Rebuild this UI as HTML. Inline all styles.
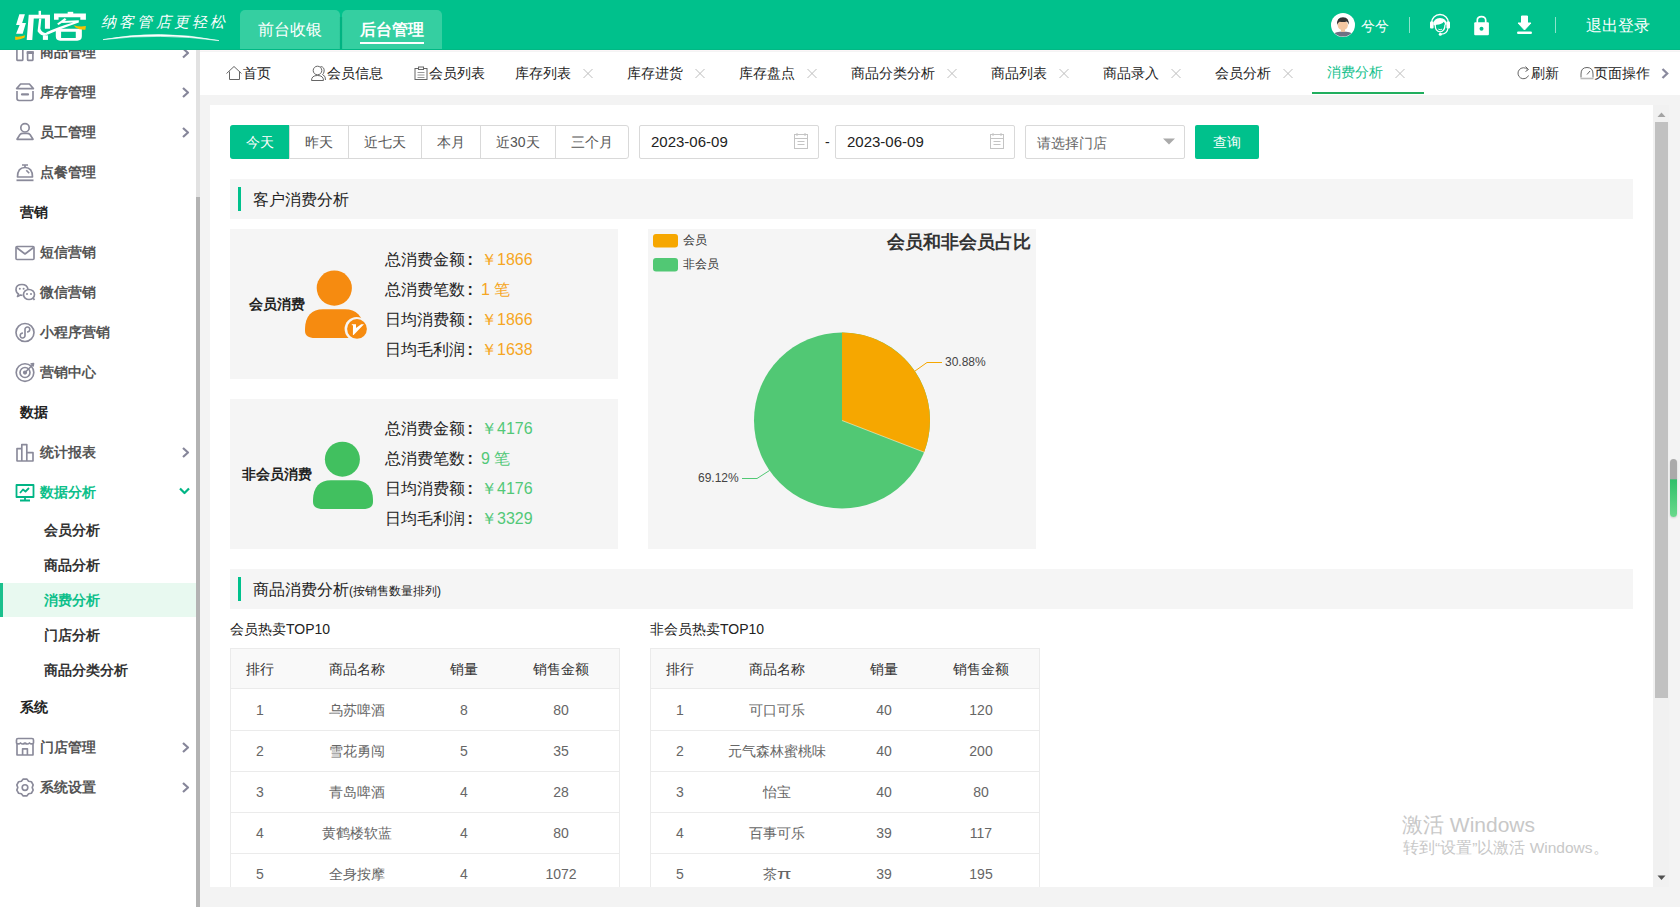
<!DOCTYPE html>
<html><head><meta charset="utf-8">
<style>
*{box-sizing:border-box;margin:0;padding:0}
html,body{width:1680px;height:907px;overflow:hidden;background:#f3f3f3;font-family:"Liberation Sans",sans-serif;color:#333}
.a{position:absolute}
.t{position:absolute;white-space:nowrap;line-height:20px;font-size:14px}
#hdr{position:absolute;left:0;top:0;width:1680px;height:50px;background:#00c18c;z-index:10}
#side{position:absolute;left:0;top:0;width:196px;height:907px;background:#fff}
#sbar{position:absolute;left:196px;top:50px;width:4px;height:857px;background:#e2e2e2}
#sthumb{position:absolute;left:196px;top:197px;width:4px;height:710px;background:#b3b3b3}
.si{position:absolute;left:40px;font-size:14px;font-weight:bold;color:#555;line-height:20px;white-space:nowrap}
.sg{position:absolute;left:20px;font-size:14px;font-weight:bold;color:#222;line-height:20px;white-space:nowrap}
.ss{position:absolute;left:44px;font-size:14px;font-weight:bold;color:#333;line-height:20px;white-space:nowrap}
.ic{position:absolute;left:15px;width:20px;height:20px}
.arr{position:absolute;left:180px;width:12px;height:12px}
#tabs{position:absolute;left:200px;top:50px;width:1480px;height:45px;background:#fff}
.tb{position:absolute;top:63px;font-size:14px;line-height:20px;color:#222;white-space:nowrap}
.x{position:absolute;top:68px;width:11px;height:11px}
#panel{position:absolute;left:210px;top:105px;width:1443px;height:782px;background:#fff;overflow:hidden}
</style></head><body>

<!-- HEADER -->
<div id="hdr">
  <svg class="a" style="left:10px;top:5px" width="85" height="40" viewBox="0 0 1680 791" preserveAspectRatio="none">
    <g fill="#fff">
      <path d="M185,185 L295,185 L240,355 L315,355 L250,570 L120,570 L190,395 L120,395Z"/>
      <path d="M370,195 L790,195 L790,470 L690,470 L690,265 L470,265 L440,690 L330,690Z"/>
      <rect x="565" y="115" width="48" height="90"/>
      <path d="M575,265 L620,265 L600,470 Q640,560 720,555 L700,610 Q600,610 545,520Z"/>
      <rect x="650" y="600" width="100" height="90"/>
      <path d="M870,170 L1500,170 L1500,290 L1390,290 L1390,240 L960,240 L960,290 L870,290Z"/>
      <rect x="1140" y="135" width="110" height="45"/>
      <path d="M930,370 L1085,255 L1115,290 L960,395Z"/>
      <path d="M1030,315 L1360,300 L1360,345 Q1000,470 760,580 L700,600 L720,540 Q950,430 1250,345 L1030,355Z"/>
      <path d="M905,520 Q905,470 960,470 L1420,470 L1420,620 Q1420,705 1330,705 L990,705 Q905,705 905,620Z M1010,530 L1010,655 L1300,655 L1300,530Z" fill-rule="evenodd"/>
    </g>
    <path d="M100,625 Q200,640 300,600 L285,650 Q200,690 105,690Z" fill="#f8c000"/>
    <path d="M1260,400 Q1380,440 1500,415 L1490,490 Q1380,500 1290,440Z" fill="#f8c000"/>
  </svg>
  <svg class="a" style="left:0;top:0" width="240" height="50"><path d="M103,39.6 Q160,29 219,40.6 Q160,32.6 103,39.6Z" fill="#fff" stroke="#fff" stroke-width="0.6"/></svg>
  <div class="a" style="left:101px;top:11px;font-size:15px;line-height:22px;color:#fff;letter-spacing:3.2px;font-style:italic;font-weight:300;font-family:'Liberation Serif',serif">纳客管店更轻松</div>
  <div class="a" style="left:240px;top:10px;width:100px;height:40px;background:#35cfa1;border-radius:5px 5px 0 0"></div>
  <div class="a" style="left:342px;top:10px;width:100px;height:40px;background:#35cfa1;border-radius:5px 5px 0 0"></div>
  <div class="t" style="left:258px;top:20px;font-size:16px;color:#fff">前台收银</div>
  <div class="t" style="left:360px;top:20px;font-size:16px;font-weight:bold;color:#fff">后台管理</div>
  <div class="a" style="left:360px;top:42px;width:64px;height:2px;background:#fff"></div>
  <div class="a" style="left:339px;top:17px;width:4px;height:33px;background:linear-gradient(90deg,rgba(0,140,100,0) 0,rgba(0,140,100,.35) 50%,rgba(0,140,100,0) 100%)"></div>
  <div class="a" style="left:0;top:49px;width:1680px;height:1px;background:#01b884"></div>
  <!-- avatar -->
  <svg class="a" style="left:1331px;top:13px" width="24" height="24" viewBox="0 0 24 24">
    <circle cx="12" cy="12" r="12" fill="#fff"/>
    <clipPath id="cc"><circle cx="12" cy="12" r="11.5"/></clipPath>
    <g clip-path="url(#cc)">
      <path d="M0,25 L1.5,21.5 Q4.5,18.4 12,18.4 Q19.5,18.4 22.5,21.5 L24,25Z" fill="#6f7083"/>
      <rect x="10" y="14.5" width="4" height="4.3" fill="#f1c39c"/>
      <ellipse cx="11.8" cy="12.2" rx="5.1" ry="5" fill="#f4c8a2"/>
      <path d="M6.2,12 Q5.2,4.2 12,4.2 Q18.5,4.2 17.6,11.8 Q17,8.6 15.6,8.4 Q13,9.6 8.6,8.8 Q6.8,9.6 6.2,12Z" fill="#333"/>
    </g>
  </svg>
  <div class="t" style="left:1361px;top:16px;color:#fff">兮兮</div>
  <div class="a" style="left:1409px;top:17px;width:1px;height:16px;background:rgba(255,255,255,.55)"></div>
  <!-- headset -->
  <svg class="a" style="left:1425px;top:10px" width="30" height="30" viewBox="1425 10 30 30">
    <g fill="#fff">
      <path d="M1431.5,23 A8.5,8.5 0 0 1 1448.5,23" stroke="#fff" stroke-width="1.4" fill="none"/>
      <rect x="1430" y="21.5" width="3.6" height="7" rx="1"/>
      <rect x="1446.4" y="21.5" width="3.6" height="7" rx="1"/>
      <path d="M1433.3,24.5 Q1433.5,18 1440,18 Q1446.5,18 1446.7,24.5 L1445.2,25 Q1444.8,22.5 1443.8,21.8 Q1442,24.3 1436.5,24.8 L1434.8,25.5Z"/>
      <path d="M1435.2,25 Q1435.2,31.5 1440,31.8 Q1445,31.5 1445,24.5" stroke="#fff" stroke-width="1.3" fill="none"/>
      <path d="M1438.3,29.2 Q1440.2,30.2 1442,29.2" stroke="#fff" stroke-width="0.9" fill="none"/>
      <path d="M1448,28 Q1447.5,33.8 1441,34.2" stroke="#fff" stroke-width="1.2" fill="none"/>
      <circle cx="1440.3" cy="34.2" r="1.5"/>
    </g>
  </svg>
  <!-- lock -->
  <svg class="a" style="left:1473px;top:14px" width="17" height="22" viewBox="0 0 17 22">
    <path d="M4.3,9.5 V6.3 Q4.3,2.6 8.5,2.6 Q12.7,2.6 12.7,6.3 V9.5" stroke="#fff" stroke-width="1.7" fill="none"/>
    <rect x="1.2" y="8.3" width="14.7" height="12.9" rx="1" fill="#fff"/>
    <circle cx="8.5" cy="14.7" r="2" fill="#00c18c"/>
  </svg>
  <!-- download -->
  <svg class="a" style="left:1515.5px;top:15px" width="17" height="20" viewBox="0 0 17 20">
    <path d="M5.5,1 H11.5 V8 H15 L8.5,15 L2,8 H5.5Z" fill="#fff" stroke="#fff" stroke-width="1" stroke-linejoin="round"/>
    <rect x="1" y="16.5" width="15" height="2.5" rx="1.2" fill="#fff"/>
  </svg>
  <div class="a" style="left:1555px;top:17px;width:1px;height:16px;background:rgba(255,255,255,.55)"></div>
  <div class="t" style="left:1586px;top:16px;font-size:16px;color:#fff">退出登录</div>
</div>

<!-- SIDEBAR -->
<div id="side">
  <svg class="a" style="left:0;top:0" width="196" height="907">
    <g stroke="#8a8a9a" stroke-width="1.65" fill="none" stroke-linejoin="round">
      <!-- 商品管理 bars -->
      <rect x="16.9" y="38" width="5.9" height="22.3" rx="0.5"/>
      <rect x="27.6" y="52" width="5.3" height="8.3" rx="0.5"/>
      <rect x="26.7" y="51.2" width="7.1" height="2.8" fill="#8a8a9a" stroke="none"/>
      <!-- 库存管理 box -->
      <path d="M17,91 V98.6 Q17,100.5 19,100.5 H31 Q33,100.5 33,98.6 V91"/>
      <path d="M16.6,88.6 L20.6,84 H29.4 L33.4,88.6Z"/>
      <path d="M22,94.4 H28" stroke-width="2.2" stroke-linecap="round"/>
      <!-- 员工管理 person -->
      <circle cx="25" cy="127.8" r="4.2"/>
      <path d="M17,139.3 L20,134.5 Q21,133.3 23,133.3 H27 Q29,133.3 30,134.5 L33,139.3Z"/>
      <!-- 点餐 bell -->
      <path d="M22,165 H28 M25,165 V167.5"/>
      <path d="M17.5,177 Q17.5,167.5 25,167.5 Q32.5,167.5 32.5,177Z"/>
      <path d="M26.3,170.2 L29.2,173.3"/>
      <path d="M16.5,180.3 H33.5" stroke-width="1.8"/>
      <!-- mail -->
      <rect x="16" y="246.5" width="18" height="13" rx="1"/>
      <path d="M16.5,247.5 L25,254 L33.5,247.5"/>
      <!-- wechat -->
      <path d="M28,289 Q27,284.5 22,284.5 Q16,284.5 16,289.5 Q16,292.5 18.5,294 L17.5,296.5 L20.5,295 Q21.5,295.3 22.5,295.3"/>
      <ellipse cx="29" cy="294.5" rx="5.5" ry="5"/>
      <path d="M33,298 L34.5,300" /><g fill="#8a8a9a" stroke="none"><circle cx="19.8" cy="288.8" r="1"/><circle cx="23.6" cy="288.8" r="1"/><circle cx="27" cy="294" r="1"/><circle cx="31" cy="294" r="1"/></g>
      <!-- mini program -->
      <circle cx="25" cy="332.5" r="9"/>
      <path d="M22.9,333.2 A2.4,2.4 0 1 0 25,335.5 V329.5 A2.4,2.4 0 1 1 27.1,331.8"/>
      <!-- target -->
      <circle cx="25" cy="372.5" r="8.8"/>
      <circle cx="25" cy="372.5" r="5"/>
      <circle cx="25" cy="372.5" r="1.3" fill="#8a8a9a"/>
      <path d="M25,372.5 L33,364.5 M30.5,364 L33.5,363.5 L33,366.5"/>
      <!-- bar chart -->
      <path d="M17,461 V448.6 H21.8 V461 M21.8,461 V444.6 H26.8 V461 M26.8,461 V452.6 H33 V461 H16.5"/>
      <!-- store -->
      <path d="M17,743 V755 H33 V743"/>
      <path d="M16.5,743 V740 Q16.5,738.5 18,738.5 H32 Q33.5,738.5 33.5,740 V743 Q31.5,745 29.5,743 Q27.5,745 25,743 Q22.5,745 20.5,743 Q18.5,745 16.5,743Z"/>
      <path d="M22.6,755 V748.8 H27.4 V755"/>
      <!-- gear -->
      <path d="M23.21,779.09 L26.79,779.09 L28.60,781.26 L31.39,781.75 L33.18,784.84 L32.20,787.50 L33.18,790.16 L31.39,793.25 L28.60,793.74 L26.79,795.91 L23.21,795.91 L21.40,793.74 L18.61,793.25 L16.82,790.16 L17.80,787.50 L16.82,784.84 L18.61,781.75 L21.40,781.26Z"/>
      <circle cx="25" cy="787.5" r="2.8"/>
      <!-- arrows -->
      <g stroke-width="2.2" stroke="#86869a">
      <path d="M183,48.5 L188,53 L183,57.5"/>
      <path d="M183,88 L188,92.5 L183,97"/>
      <path d="M183,128 L188,132.5 L183,137"/>
      <path d="M183,448 L188,452.5 L183,457"/>
      <path d="M183,743 L188,747.5 L183,752"/>
      <path d="M183,783 L188,787.5 L183,792"/>
      </g>
    </g>
    <g stroke="#00b585" stroke-width="1.8" fill="none" stroke-linejoin="round">
      <rect x="16.5" y="485" width="17" height="12" />
      <path d="M25,497 V500 M20,500.5 H30"/>
      <path d="M20,493 L23,489.5 L25.5,491.5 L29,488"/>
      <path d="M180,488.5 L184.5,493 L189,488.5" stroke-width="2.2"/>
    </g>
    <rect x="0" y="583" width="196" height="34" fill="#e8f9f0"/>
    <rect x="0" y="583" width="3" height="34" fill="#1bc08d"/>
  </svg>
  <div class="si" style="top:42px">商品管理</div>
  <div class="si" style="top:82px">库存管理</div>
  <div class="si" style="top:122px">员工管理</div>
  <div class="si" style="top:162px">点餐管理</div>
  <div class="sg" style="top:202px">营销</div>
  <div class="si" style="top:242px">短信营销</div>
  <div class="si" style="top:282px">微信营销</div>
  <div class="si" style="top:322px">小程序营销</div>
  <div class="si" style="top:362px">营销中心</div>
  <div class="sg" style="top:402px">数据</div>
  <div class="si" style="top:442px">统计报表</div>
  <div class="si" style="top:482px;color:#0dbf8a">数据分析</div>
  <div class="ss" style="top:520px">会员分析</div>
  <div class="ss" style="top:555px">商品分析</div>
  <div class="ss" style="top:590px;color:#0dbf8a">消费分析</div>
  <div class="ss" style="top:625px">门店分析</div>
  <div class="ss" style="top:660px">商品分类分析</div>
  <div class="sg" style="top:697px">系统</div>
  <div class="si" style="top:737px">门店管理</div>
  <div class="si" style="top:777px">系统设置</div>
</div>
<div id="sbar"></div><div id="sthumb"></div>

<!-- TABS -->
<div id="tabs"></div>
<div class="a" style="left:200px;top:50px;width:1480px;height:1px;background:#fcf6f8"></div>
<div class="a" style="left:200px;top:51px;width:1480px;height:1px;background:#f4f4f4"></div>
<svg class="a" style="left:0;top:0;z-index:2" width="1680" height="100">
  <g stroke="#666" stroke-width="1" fill="none">
    <path d="M226.5,73.5 L234,66.5 L241.5,73.5 M229.5,71.5 V79.5 H239.5 V71.5"/>
    <circle cx="317.5" cy="70.5" r="4.3"/>
    <path d="M311.5,80.5 Q311.5,75.5 317.5,75.5 Q323.5,75.5 323.5,80.5Z"/>
    <path d="M320.5,66.5 Q325,67 324,72 Q323.5,74 322.5,74.5 Q326,76 325.5,80"/>
    <rect x="415" y="68.5" width="12" height="11"/>
    <rect x="418.5" y="67" width="5" height="2.5" fill="#fff"/>
    <path d="M417.5,72.5 H424.5 M417.5,75 H424.5 M417.5,77.5 H424.5" stroke="#999"/>
  </g>
  <g stroke="#bdbdbd" stroke-width="1">
    <path d="M583.5,69 L592.5,78 M592.5,69 L583.5,78"/>
    <path d="M695.5,69 L704.5,78 M704.5,69 L695.5,78"/>
    <path d="M807.5,69 L816.5,78 M816.5,69 L807.5,78"/>
    <path d="M947.5,69 L956.5,78 M956.5,69 L947.5,78"/>
    <path d="M1059.5,69 L1068.5,78 M1068.5,69 L1059.5,78"/>
    <path d="M1171.5,69 L1180.5,78 M1180.5,69 L1171.5,78"/>
    <path d="M1283.5,69 L1292.5,78 M1292.5,69 L1283.5,78"/>
    <path d="M1395.5,69 L1404.5,78 M1404.5,69 L1395.5,78"/>
  </g>
  <g stroke="#666" stroke-width="1" fill="none">
    <path d="M1527.5,69.5 A5.5,5.5 0 1 0 1528.5,75.5"/>
    <path d="M1525.5,66.5 L1528.5,69.5 L1525.5,71.5"/>
    <path d="M1581,77.5 V74 Q1581,67.5 1587,67.5 Q1593,67.5 1593,74 V77.5"/><path d="M1580.5,78.5 H1593.5" stroke="#bbb" stroke-width="1.6"/>
    <path d="M1587,74.5 L1590,71"/>
  </g>
  <path d="M1662.5,69 L1667.2,73.5 L1662.5,78" stroke="#8a8a9e" stroke-width="2.3" fill="none"/>
  <rect x="1312" y="92" width="112" height="2" fill="#20ae5e"/>
</svg>
<div class="tb" style="left:243px">首页</div>
<div class="tb" style="left:327px">会员信息</div>
<div class="tb" style="left:429px">会员列表</div>
<div class="tb" style="left:515px">库存列表</div>
<div class="tb" style="left:627px">库存进货</div>
<div class="tb" style="left:739px">库存盘点</div>
<div class="tb" style="left:851px">商品分类分析</div>
<div class="tb" style="left:991px">商品列表</div>
<div class="tb" style="left:1103px">商品录入</div>
<div class="tb" style="left:1215px">会员分析</div>
<div class="tb" style="left:1327px;top:62px;color:#12bf8c">消费分析</div>
<div class="tb" style="left:1531px">刷新</div>
<div class="tb" style="left:1594px">页面操作</div>

<!-- PANEL -->
<div id="panel"></div>
<!-- filter row -->
<div class="a" style="left:230px;top:125px;width:399px;height:34px;border:1px solid #d9d9d9;border-radius:3px;background:#fff"></div>
<div class="a" style="left:230px;top:125px;width:59px;height:34px;background:#00c18c;border-radius:3px 0 0 3px"></div>
<div class="a" style="left:348px;top:125px;width:1px;height:34px;background:#d9d9d9"></div>
<div class="a" style="left:421px;top:125px;width:1px;height:34px;background:#d9d9d9"></div>
<div class="a" style="left:480px;top:125px;width:1px;height:34px;background:#d9d9d9"></div>
<div class="a" style="left:555px;top:125px;width:1px;height:34px;background:#d9d9d9"></div>
<div class="a" style="left:289px;top:125px;width:1px;height:34px;background:#d9d9d9"></div>
<div class="t" style="left:246px;top:132px;color:#fff">今天</div>
<div class="t" style="left:305px;top:132px;color:#555">昨天</div>
<div class="t" style="left:364px;top:132px;color:#555">近七天</div>
<div class="t" style="left:437px;top:132px;color:#555">本月</div>
<div class="t" style="left:496px;top:132px;color:#555">近30天</div>
<div class="t" style="left:571px;top:132px;color:#555">三个月</div>

<div class="a" style="left:639px;top:125px;width:180px;height:34px;border:1px solid #d9d9d9;border-radius:2px;background:#fff"></div>
<div class="a" style="left:835px;top:125px;width:180px;height:34px;border:1px solid #d9d9d9;border-radius:2px;background:#fff"></div>
<div class="t" style="left:651px;top:132px;font-size:15px;color:#222">2023-06-09</div>
<div class="t" style="left:847px;top:132px;font-size:15px;color:#222">2023-06-09</div>
<div class="t" style="left:825px;top:132px;color:#222">-</div>
<svg class="a" style="left:0;top:0" width="1680" height="200">
  <g stroke="#c4c4c4" stroke-width="1" fill="none">
    <rect x="794.5" y="134.5" width="13" height="14"/>
    <path d="M797,133 V136 M805,133 V136 M794.5,138.5 H807.5 M797.5,141.5 H804.5 M797.5,144.5 H804.5"/>
    <rect x="990.5" y="134.5" width="13" height="14"/>
    <path d="M993,133 V136 M1001,133 V136 M990.5,138.5 H1003.5 M993.5,141.5 H1000.5 M993.5,144.5 H1000.5"/>
  </g>
  </svg>
<div class="a" style="left:1025px;top:125px;width:160px;height:34px;border:1px solid #d9d9d9;border-radius:2px;background:#fff"></div>
<div class="t" style="left:1037px;top:133px;color:#666">请选择门店</div>
<svg class="a" style="left:1160px;top:135px" width="20" height="12"><path d="M3,3.5 H15 L9,9.5Z" fill="#aaa"/></svg>
<div class="a" style="left:1195px;top:125px;width:64px;height:34px;background:#00c18c;border-radius:2px"></div>
<div class="t" style="left:1213px;top:132px;color:#fff">查询</div>

<!-- section 1 -->
<div class="a" style="left:230px;top:179px;width:1403px;height:40px;background:#f5f5f5"></div>
<div class="a" style="left:238px;top:187px;width:3px;height:24px;background:#00c18c"></div>
<div class="t" style="left:253px;top:190px;font-size:16px;color:#222">客户消费分析</div>

<!-- card 1 -->
<div class="a" style="left:230px;top:229px;width:388px;height:150px;background:#f5f5f5"></div>
<div class="t" style="left:249px;top:294px;font-weight:bold;color:#222">会员消费</div>
<svg class="a" style="left:300px;top:265px" width="75" height="80" viewBox="300 265 75 80">
  <circle cx="334.3" cy="288.1" r="17.6" fill="#f68b10"/>
  <path d="M305,329 C305,316 312,309.2 323,309.2 H345 C356,309.2 363,316 364,329 V331 C364,335.5 361,338 355,338 H315 C308.5,338 305,335.5 305,331Z" fill="#f68b10"/>
  <circle cx="356.6" cy="328.9" r="12" fill="#f5f5f5"/>
  <circle cx="357" cy="328.9" r="9.9" fill="#f68b10"/>
  <path d="M351.8,324.2 L356,324.2 L356,328 L361.2,324.2 L364,324.2 L353.6,334.9 L352.9,334.9 L353,325.3 L351.8,325.2Z" fill="#fff"/>
</svg>
<div class="t" style="left:385px;top:250px;font-size:16px;color:#222">总消费金额<span style="display:inline-block;width:16px;padding-left:2.5px;font-weight:bold">:</span><span style="color:#f5a623">￥1866</span></div>
<div class="t" style="left:385px;top:280px;font-size:16px;color:#222">总消费笔数<span style="display:inline-block;width:16px;padding-left:2.5px;font-weight:bold">:</span><span style="color:#f5a623">1 笔</span></div>
<div class="t" style="left:385px;top:310px;font-size:16px;color:#222">日均消费额<span style="display:inline-block;width:16px;padding-left:2.5px;font-weight:bold">:</span><span style="color:#f5a623">￥1866</span></div>
<div class="t" style="left:385px;top:340px;font-size:16px;color:#222">日均毛利润<span style="display:inline-block;width:16px;padding-left:2.5px;font-weight:bold">:</span><span style="color:#f5a623">￥1638</span></div>

<!-- card 2 -->
<div class="a" style="left:230px;top:399px;width:388px;height:150px;background:#f5f5f5"></div>
<div class="t" style="left:242px;top:464px;font-weight:bold;color:#222">非会员消费</div>
<svg class="a" style="left:300px;top:435px" width="80" height="80" viewBox="300 435 80 80">
  <circle cx="342.4" cy="459.2" r="17.5" fill="#41c05f"/>
  <path d="M313,500 C313,487 320,480.2 331,480.2 H355 C366,480.2 373,487 373,500 V502 C373,506.5 369.5,509 363,509 H323 C316.5,509 313,506.5 313,502Z" fill="#41c05f"/>
</svg>
<div class="t" style="left:385px;top:419px;font-size:16px;color:#222">总消费金额<span style="display:inline-block;width:16px;padding-left:2.5px;font-weight:bold">:</span><span style="color:#52c878">￥4176</span></div>
<div class="t" style="left:385px;top:449px;font-size:16px;color:#222">总消费笔数<span style="display:inline-block;width:16px;padding-left:2.5px;font-weight:bold">:</span><span style="color:#52c878">9 笔</span></div>
<div class="t" style="left:385px;top:479px;font-size:16px;color:#222">日均消费额<span style="display:inline-block;width:16px;padding-left:2.5px;font-weight:bold">:</span><span style="color:#52c878">￥4176</span></div>
<div class="t" style="left:385px;top:509px;font-size:16px;color:#222">日均毛利润<span style="display:inline-block;width:16px;padding-left:2.5px;font-weight:bold">:</span><span style="color:#52c878">￥3329</span></div>

<!-- pie panel -->
<div class="a" style="left:648px;top:229px;width:388px;height:320px;background:#f5f5f5"></div>
<svg class="a" style="left:648px;top:229px" width="388" height="320" viewBox="648 229 388 320">
  <rect x="653" y="234" width="25" height="13.5" rx="3" fill="#f6a700"/>
  <rect x="653" y="258" width="25" height="13.5" rx="3" fill="#51c874"/>
  <circle cx="842" cy="420.5" r="88" fill="#51c874"/>
  <path d="M842,420.5 V332.5 A88,88 0 0 1 924.1,452.2Z" fill="#f6a700"/>
  <path d="M842,420.5 L924.1,452.2" stroke="#fff" stroke-width="0.5"/>
  <path d="M915,371 L927,362.5 H942" stroke="#f6a700" stroke-width="1" fill="none"/>
  <path d="M769.5,470.5 L757,478.5 H742" stroke="#51c874" stroke-width="1" fill="none"/>
</svg>
<div class="t" style="left:683px;top:230px;font-size:12px;color:#333">会员</div>
<div class="t" style="left:683px;top:254px;font-size:12px;color:#333">非会员</div>
<div class="t" style="left:887px;top:232px;font-size:18px;font-weight:bold;color:#333">会员和非会员占比</div>
<div class="t" style="left:945px;top:352px;font-size:12px;color:#444">30.88%</div>
<div class="t" style="left:698px;top:468px;font-size:12px;color:#444">69.12%</div>

<!-- section 2 -->
<div class="a" style="left:230px;top:569px;width:1403px;height:40px;background:#f5f5f5"></div>
<div class="a" style="left:238px;top:577px;width:3px;height:24px;background:#00c18c"></div>
<div class="t" style="left:253px;top:580px;font-size:16px;color:#222">商品消费分析<span style="font-size:12px">(按销售数量排列)</span></div>
<div class="t" style="left:230px;top:619px;color:#222">会员热卖TOP10</div>
<div class="t" style="left:650px;top:619px;color:#222">非会员热卖TOP10</div>

<div id="tbl1" class="a" style="left:230px;top:648px;width:390px;height:260px;border:1px solid #ebebeb;border-bottom:none"></div>
<div id="tbl2" class="a" style="left:650px;top:648px;width:390px;height:260px;border:1px solid #ebebeb;border-bottom:none"></div>
<div class="a" style="left:231px;top:649px;width:388px;height:40px;background:#f9f9f9;border-bottom:1px solid #ebebeb"></div>
<div class="a" style="left:231px;top:730px;width:388px;height:1px;background:#ebebeb"></div>
<div class="a" style="left:231px;top:771px;width:388px;height:1px;background:#ebebeb"></div>
<div class="a" style="left:231px;top:812px;width:388px;height:1px;background:#ebebeb"></div>
<div class="a" style="left:231px;top:853px;width:388px;height:1px;background:#ebebeb"></div>
<div class="a" style="left:231px;top:894px;width:388px;height:1px;background:#ebebeb"></div>
<div class="t" style="left:200px;top:659px;width:120px;text-align:center;color:#333">排行</div>
<div class="t" style="left:297px;top:659px;width:120px;text-align:center;color:#333">商品名称</div>
<div class="t" style="left:404px;top:659px;width:120px;text-align:center;color:#333">销量</div>
<div class="t" style="left:501px;top:659px;width:120px;text-align:center;color:#333">销售金额</div>
<div class="t" style="left:200px;top:700px;width:120px;text-align:center;color:#666">1</div>
<div class="t" style="left:297px;top:700px;width:120px;text-align:center;color:#666">乌苏啤酒</div>
<div class="t" style="left:404px;top:700px;width:120px;text-align:center;color:#666">8</div>
<div class="t" style="left:501px;top:700px;width:120px;text-align:center;color:#666">80</div>
<div class="t" style="left:200px;top:741px;width:120px;text-align:center;color:#666">2</div>
<div class="t" style="left:297px;top:741px;width:120px;text-align:center;color:#666">雪花勇闯</div>
<div class="t" style="left:404px;top:741px;width:120px;text-align:center;color:#666">5</div>
<div class="t" style="left:501px;top:741px;width:120px;text-align:center;color:#666">35</div>
<div class="t" style="left:200px;top:782px;width:120px;text-align:center;color:#666">3</div>
<div class="t" style="left:297px;top:782px;width:120px;text-align:center;color:#666">青岛啤酒</div>
<div class="t" style="left:404px;top:782px;width:120px;text-align:center;color:#666">4</div>
<div class="t" style="left:501px;top:782px;width:120px;text-align:center;color:#666">28</div>
<div class="t" style="left:200px;top:823px;width:120px;text-align:center;color:#666">4</div>
<div class="t" style="left:297px;top:823px;width:120px;text-align:center;color:#666">黄鹤楼软蓝</div>
<div class="t" style="left:404px;top:823px;width:120px;text-align:center;color:#666">4</div>
<div class="t" style="left:501px;top:823px;width:120px;text-align:center;color:#666">80</div>
<div class="t" style="left:200px;top:864px;width:120px;text-align:center;color:#666">5</div>
<div class="t" style="left:297px;top:864px;width:120px;text-align:center;color:#666">全身按摩</div>
<div class="t" style="left:404px;top:864px;width:120px;text-align:center;color:#666">4</div>
<div class="t" style="left:501px;top:864px;width:120px;text-align:center;color:#666">1072</div>
<div class="a" style="left:651px;top:649px;width:388px;height:40px;background:#f9f9f9;border-bottom:1px solid #ebebeb"></div>
<div class="a" style="left:651px;top:730px;width:388px;height:1px;background:#ebebeb"></div>
<div class="a" style="left:651px;top:771px;width:388px;height:1px;background:#ebebeb"></div>
<div class="a" style="left:651px;top:812px;width:388px;height:1px;background:#ebebeb"></div>
<div class="a" style="left:651px;top:853px;width:388px;height:1px;background:#ebebeb"></div>
<div class="a" style="left:651px;top:894px;width:388px;height:1px;background:#ebebeb"></div>
<div class="t" style="left:620px;top:659px;width:120px;text-align:center;color:#333">排行</div>
<div class="t" style="left:717px;top:659px;width:120px;text-align:center;color:#333">商品名称</div>
<div class="t" style="left:824px;top:659px;width:120px;text-align:center;color:#333">销量</div>
<div class="t" style="left:921px;top:659px;width:120px;text-align:center;color:#333">销售金额</div>
<div class="t" style="left:620px;top:700px;width:120px;text-align:center;color:#666">1</div>
<div class="t" style="left:717px;top:700px;width:120px;text-align:center;color:#666">可口可乐</div>
<div class="t" style="left:824px;top:700px;width:120px;text-align:center;color:#666">40</div>
<div class="t" style="left:921px;top:700px;width:120px;text-align:center;color:#666">120</div>
<div class="t" style="left:620px;top:741px;width:120px;text-align:center;color:#666">2</div>
<div class="t" style="left:717px;top:741px;width:120px;text-align:center;color:#666">元气森林蜜桃味</div>
<div class="t" style="left:824px;top:741px;width:120px;text-align:center;color:#666">40</div>
<div class="t" style="left:921px;top:741px;width:120px;text-align:center;color:#666">200</div>
<div class="t" style="left:620px;top:782px;width:120px;text-align:center;color:#666">3</div>
<div class="t" style="left:717px;top:782px;width:120px;text-align:center;color:#666">怡宝</div>
<div class="t" style="left:824px;top:782px;width:120px;text-align:center;color:#666">40</div>
<div class="t" style="left:921px;top:782px;width:120px;text-align:center;color:#666">80</div>
<div class="t" style="left:620px;top:823px;width:120px;text-align:center;color:#666">4</div>
<div class="t" style="left:717px;top:823px;width:120px;text-align:center;color:#666">百事可乐</div>
<div class="t" style="left:824px;top:823px;width:120px;text-align:center;color:#666">39</div>
<div class="t" style="left:921px;top:823px;width:120px;text-align:center;color:#666">117</div>
<div class="t" style="left:620px;top:864px;width:120px;text-align:center;color:#666">5</div>
<div class="t" style="left:717px;top:864px;width:120px;text-align:center;color:#666">茶<span style="display:inline-block;transform:scale(1.5,1.1);transform-origin:0 60%;margin-right:5px">π</span></div>
<div class="t" style="left:824px;top:864px;width:120px;text-align:center;color:#666">39</div>
<div class="t" style="left:921px;top:864px;width:120px;text-align:center;color:#666">195</div>



<!-- bottom strip & scrollbar -->
<div class="a" style="left:200px;top:887px;width:1480px;height:20px;background:#f3f3f3;z-index:5"></div>
<div class="a" style="left:1653px;top:105px;width:16px;height:782px;background:#f1f1f1;z-index:5"></div>
<div class="a" style="left:1655px;top:122px;width:13px;height:576px;background:#c1c1c1;z-index:5"></div>
<svg class="a" style="left:1653px;top:105px;z-index:6" width="16" height="782">
  <path d="M4.5,12 L8.5,7.5 L12.5,12Z" fill="#a3a3a3"/>
  <path d="M4.5,770.5 L8.5,775 L12.5,770.5Z" fill="#505050"/>
</svg>
<div class="a" style="left:1670px;top:459px;width:7px;height:58px;border-radius:4px;background:linear-gradient(#aaa 0,#aaa 34%,#2fc06a 36%,#6ad98c 100%);z-index:6;box-shadow:0 1px 2px rgba(0,0,0,.15)"></div>
<!-- watermark -->
<div class="t" style="left:1402px;top:813px;font-size:21px;line-height:24px;color:#c8c8c8;z-index:4">激活 Windows</div>
<div class="t" style="left:1403px;top:838px;font-size:15.5px;line-height:20px;color:#c8c8c8;z-index:4">转到“设置”以激活 Windows。</div>

</body></html>
